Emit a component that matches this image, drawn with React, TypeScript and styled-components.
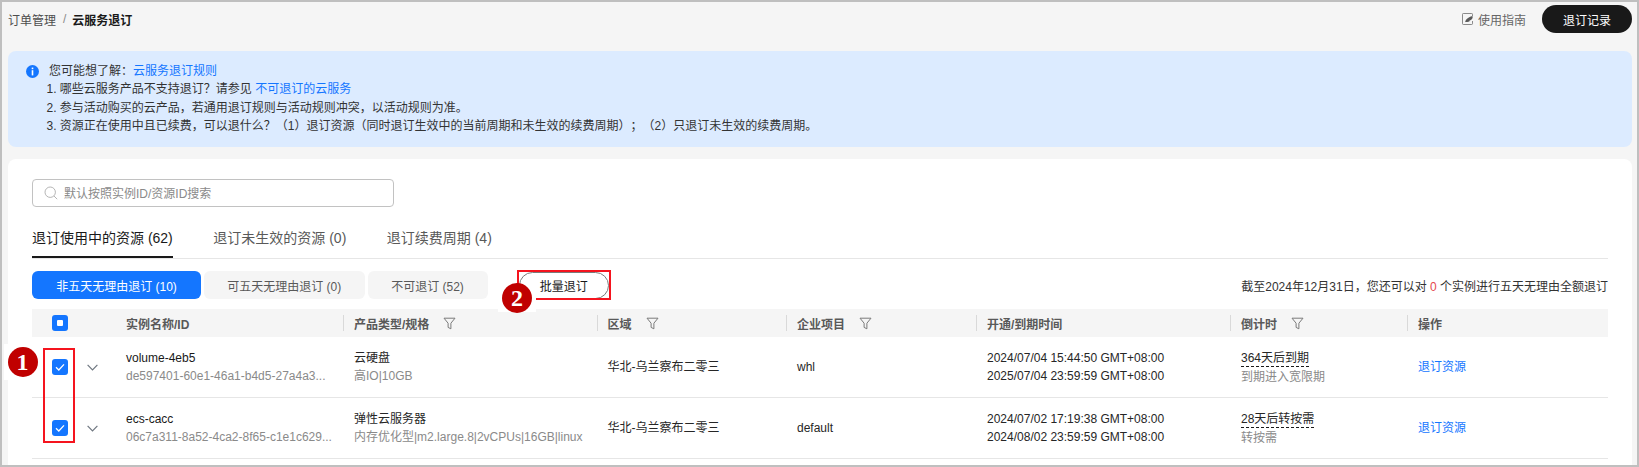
import React from "react";
import styled, { createGlobalStyle } from "styled-components";

const Global = createGlobalStyle`
  html, body { margin: 0; padding: 0; background: #f5f5f5; overflow: hidden; }
  * { box-sizing: border-box; }
  body {
    font-family: "Liberation Sans", Arial, "Noto Sans CJK SC", sans-serif;
    font-size: 12px;
    color: #191919;
    text-spacing-trim: space-all;
  }
`;

const Page = styled.div`
  position: relative;
  width: 1639px;
  height: 467px;
  border: 2px solid #bfbfbf;
  background: #f5f5f5;
  padding: 3px 5px 0 6px;
  overflow: hidden;
  display: flex;
  flex-direction: column;
`;

const TopBar = styled.header`
  display: flex;
  align-items: center;
  height: 28px;
  flex: none;
`;
const Crumb = styled.span`
  color: #4d4d4d;
  font-size: 12px;
`;
const CrumbSep = styled.span`
  color: #8a8a8a;
  margin: 0 6px 0 7px;
`;
const CrumbNow = styled.span`
  color: #191919;
  font-weight: 700;
  font-size: 12px;
`;
const GuideLink = styled.span`
  margin-left: auto;
  display: inline-flex;
  align-items: center;
  gap: 4px;
  color: #666;
  margin-right: 16px;
`;
const RecordButton = styled.button`
  width: 90px;
  height: 28px;
  border: none;
  border-radius: 14px;
  background: #191919;
  color: #fff;
  font: inherit;
  padding: 0;
`;

const Notice = styled.section`
  margin-top: 18px;
  height: 96px;
  flex: none;
  display: flex;
  background: #dcebff;
  border-radius: 8px;
  padding: 11px 0 0 18px;
  line-height: 18.3px;
  color: #333;
`;
const NoticeIcon = styled.span`
  display: flex;
  flex: none;
  height: 18px;
  align-items: center;
  width: 23px;
`;
const NoticeBody = styled.div`
  display: flex;
  flex-direction: column;
`;
const NoticeHead = styled.div`
  margin-bottom: 0;
`;
const NoticeLine = styled.div`
  margin-left: -2.5px;
`;
const Link = styled.a`
  color: #1476ff;
  text-decoration: none;
`;

const Panel = styled.main`
  margin-top: 12px;
  flex: 1;
  background: #fff;
  border-radius: 8px 8px 0 0;
  padding: 20px 24px 0;
  display: flex;
  flex-direction: column;
`;
const SearchBox = styled.div`
  width: 362px;
  height: 28px;
  flex: none;
  border: 1px solid #c2c2c2;
  border-radius: 4px;
  display: flex;
  align-items: center;
  padding: 0 0 1px 11px;
  gap: 6px;
  color: #8a8a8a;
`;
const Tabs = styled.nav`
  margin-top: 15px;
  height: 37px;
  flex: none;
  display: flex;
  border-bottom: 1px solid #e6e6e6;
`;
const Tab = styled.div<{ $active?: boolean }>`
  height: 36px;
  margin-right: 40.5px;
  padding-top: 6px;
  line-height: 20px;
  font-size: 14px;
  color: ${(p) => (p.$active ? "#191919" : "#595959")};
  border-bottom: 2px solid ${(p) => (p.$active ? "#191919" : "transparent")};
`;
const Toolbar = styled.div`
  margin-top: 12px;
  height: 28px;
  flex: none;
  display: flex;
  align-items: center;
`;
const Segment = styled.div<{ $active?: boolean; $w: number }>`
  width: ${(p) => p.$w}px;
  height: 28px;
  margin-right: 2.5px;
  border-radius: 6px;
  display: flex;
  align-items: center;
  justify-content: center;
  background: ${(p) => (p.$active ? "#1476ff" : "#f5f5f5")};
  color: ${(p) => (p.$active ? "#fff" : "#595959")};
`;
const BatchButton = styled.button`
  margin-left: 29px;
  width: 89.5px;
  height: 27px;
  border: 1px solid #7a7a7a;
  border-radius: 14px;
  background: #fff;
  color: #191919;
  font: inherit;
  padding: 0;
`;
const Quota = styled.div`
  margin-left: auto;
  color: #333;
`;
const Zero = styled.span`
  color: #e5484d;
`;

const Row = styled.div`
  display: grid;
  grid-template-columns: 82px 229px 253.5px 189.5px 190px 254px 177px 201px;
  align-items: center;
  flex: none;
`;
const HeadRow = styled(Row)`
  margin-top: 10px;
  height: 28px;
  background: #f5f5f5;
  color: #595959;
  font-weight: 700;
`;
const BodyRow = styled(Row)`
  height: 61px;
  border-bottom: 1px solid #e6e6e6;
  line-height: 18px;
`;
const SelectCell = styled.div`
  display: flex;
  align-items: center;
  padding-left: 20px;
`;
const Chevron = styled.svg`
  margin-left: 19px;
  flex: none;
`;
const CheckBox = styled.span`
  width: 16px;
  height: 16px;
  border-radius: 3px;
  background: #1476ff;
  display: flex;
  align-items: center;
  justify-content: center;
  flex: none;
`;
const Dot = styled.span`
  width: 6px;
  height: 6px;
  border-radius: 1px;
  background: #fff;
`;
const HeadName = styled.div`
  padding-left: 12px;
`;
const HeadCell = styled.div`
  height: 16px;
  display: flex;
  align-items: center;
  border-left: 1px solid #d9d9d9;
  padding-left: 10px;
  gap: 14px;
`;
const NameCell = styled.div`
  padding-left: 12px;
`;
const Cell = styled.div`
  padding-left: 11px;
  color: #262626;
  white-space: nowrap;
`;
const Muted = styled.div`
  color: #8a8a8a;
  white-space: nowrap;
`;
const Hint = styled.span`
  display: inline-block;
  line-height: 16px;
  height: 17px;
  border-bottom: 1px dashed #191919;
  margin-bottom: 1px;
`;

const RedBox = styled.div<{ $x: number; $y: number; $w: number; $h: number }>`
  position: absolute;
  left: ${(p) => p.$x - 2}px;
  top: ${(p) => p.$y - 2}px;
  width: ${(p) => p.$w}px;
  height: ${(p) => p.$h}px;
  border: 2px solid #f5141e;
  pointer-events: none;
`;
const Callout = styled.div<{ $x: number; $y: number; $w: number; $h: number }>`
  position: absolute;
  left: ${(p) => p.$x - 2}px;
  top: ${(p) => p.$y - 2}px;
  width: ${(p) => p.$w}px;
  height: ${(p) => p.$h}px;
  background: #fff;
  display: flex;
  align-items: center;
  justify-content: center;
`;
const CalloutDot = styled.div`
  width: 30px;
  height: 30px;
  flex: none;
  border-radius: 50%;
  background: #c00000;
  color: #fff;
  font-family: "Liberation Serif", serif;
  font-weight: 700;
  font-size: 24px;
  display: flex;
  align-items: center;
  justify-content: center;
`;

const FilterIcon = () => (
  <svg width="13" height="13" viewBox="0 0 13 13" fill="none">
    <path d="M1 1.2h11L7.9 6.2v5.6L5.1 10.4V6.2L1 1.2z" stroke="#7a7a7a" strokeWidth="1" strokeLinejoin="round" />
  </svg>
);

const Check = () => (
  <svg width="12" height="12" viewBox="0 0 12 12" fill="none">
    <path d="M2 6.3l2.8 2.7L10 3.4" stroke="#fff" strokeWidth="1.3" />
  </svg>
);

const Down = () => (
  <Chevron width="11" height="7" viewBox="0 0 11 7" fill="none">
    <path d="M.6.8l4.9 5 4.9-5" stroke="#6f7780" strokeWidth="1.2" />
  </Chevron>
);

const rows = [
  {
    name: "volume-4eb5",
    id: "de597401-60e1-46a1-b4d5-27a4a3...",
    type: "云硬盘",
    spec: "高IO|10GB",
    project: "whl",
    start: "2024/07/04 15:44:50 GMT+08:00",
    end: "2025/07/04 23:59:59 GMT+08:00",
    left: "364天后到期",
    note: "到期进入宽限期",
  },
  {
    name: "ecs-cacc",
    id: "06c7a311-8a52-4ca2-8f65-c1e1c629...",
    type: "弹性云服务器",
    spec: "内存优化型|m2.large.8|2vCPUs|16GB|linux",
    project: "default",
    start: "2024/07/02 17:19:38 GMT+08:00",
    end: "2024/08/02 23:59:59 GMT+08:00",
    left: "28天后转按需",
    note: "转按需",
  },
];

export default function App() {
  return (
    <Page>
      <Global />
      <TopBar>
        <Crumb>订单管理</Crumb>
        <CrumbSep>/</CrumbSep>
        <CrumbNow>云服务退订</CrumbNow>
        <GuideLink>
          <svg width="12" height="12" viewBox="0 0 12 12" fill="none">
            <path d="M10.5 3V1.2a.7.7 0 0 0-.7-.7H1.2a.7.7 0 0 0-.7.7v9.6c0 .4.3.7.7.7h8.6c.4 0 .7-.3.7-.7V8" stroke="#8a8a8a" />
            <path d="M3 9.3c.6-2.6 2.4-4.8 7.5-6.3.6 2-.4 3.6-2 4.2l-1.2.2.6.5c-1.2 1-2.8 1.2-4.2.8L3 9.3z" fill="#595959" />
          </svg>
          使用指南
        </GuideLink>
        <RecordButton>退订记录</RecordButton>
      </TopBar>

      <Notice>
        <NoticeIcon>
          <svg width="13" height="13" viewBox="0 0 13 13">
            <circle cx="6.5" cy="6.5" r="6.5" fill="#1476ff" />
            <rect x="5.7" y="2.6" width="1.6" height="1.6" fill="#fff" />
            <rect x="5.7" y="5.2" width="1.6" height="5.2" fill="#fff" />
          </svg>
        </NoticeIcon>
        <NoticeBody>
          <NoticeHead>
            您可能想了解：<Link>云服务退订规则</Link>
          </NoticeHead>
          <NoticeLine>
            1. 哪些云服务产品不支持退订？请参见 <Link>不可退订的云服务</Link>
          </NoticeLine>
          <NoticeLine>2. 参与活动购买的云产品，若通用退订规则与活动规则冲突，以活动规则为准。</NoticeLine>
          <NoticeLine>
            3. 资源正在使用中且已续费，可以退什么？（1）退订资源（同时退订生效中的当前周期和未生效的续费周期）；（2）只退订未生效的续费周期。
          </NoticeLine>
        </NoticeBody>
      </Notice>

      <Panel>
        <SearchBox>
          <svg width="14" height="14" viewBox="0 0 14 14" fill="none">
            <circle cx="6.2" cy="6.2" r="5.2" stroke="#b5b5b5" />
            <path d="M10 10l3.2 3.2" stroke="#b5b5b5" />
          </svg>
          默认按照实例ID/资源ID搜索
        </SearchBox>
        <Tabs>
          <Tab $active>退订使用中的资源 (62)</Tab>
          <Tab>退订未生效的资源 (0)</Tab>
          <Tab>退订续费周期 (4)</Tab>
        </Tabs>
        <Toolbar>
          <Segment $active $w={169}>非五天无理由退订 (10)</Segment>
          <Segment $w={161.5}>可五天无理由退订 (0)</Segment>
          <Segment $w={120}>不可退订 (52)</Segment>
          <BatchButton>批量退订</BatchButton>
          <Quota>
            截至2024年12月31日，您还可以对 <Zero>0</Zero> 个实例进行五天无理由全额退订
          </Quota>
        </Toolbar>
        <HeadRow>
          <SelectCell>
            <CheckBox>
              <Dot />
            </CheckBox>
          </SelectCell>
          <HeadName>实例名称/ID</HeadName>
          <HeadCell>
            产品类型/规格
            <FilterIcon />
          </HeadCell>
          <HeadCell>
            区域
            <FilterIcon />
          </HeadCell>
          <HeadCell>
            企业项目
            <FilterIcon />
          </HeadCell>
          <HeadCell>开通/到期时间</HeadCell>
          <HeadCell>
            倒计时
            <FilterIcon />
          </HeadCell>
          <HeadCell>操作</HeadCell>
        </HeadRow>
        {rows.map((r) => (
          <BodyRow key={r.name}>
            <SelectCell>
              <CheckBox>
                <Check />
              </CheckBox>
              <Down />
            </SelectCell>
            <NameCell>
              <div>{r.name}</div>
              <Muted>{r.id}</Muted>
            </NameCell>
            <Cell>
              <div>{r.type}</div>
              <Muted>{r.spec}</Muted>
            </Cell>
            <Cell>华北-乌兰察布二零三</Cell>
            <Cell>{r.project}</Cell>
            <Cell>
              <div>{r.start}</div>
              <div>{r.end}</div>
            </Cell>
            <Cell>
              <Hint>{r.left}</Hint>
              <Muted>{r.note}</Muted>
            </Cell>
            <Cell>
              <Link>退订资源</Link>
            </Cell>
          </BodyRow>
        ))}
      </Panel>

      <RedBox $x={43} $y={348} $w={32} $h={95} />
      <RedBox $x={516.5} $y={270} $w={94} $h={30} />
      <Callout $x={4} $y={344} $w={37} $h={36}>
        <CalloutDot>1</CalloutDot>
      </Callout>
      <Callout $x={498} $y={284} $w={38} $h={28}>
        <CalloutDot>2</CalloutDot>
      </Callout>
    </Page>
  );
}
